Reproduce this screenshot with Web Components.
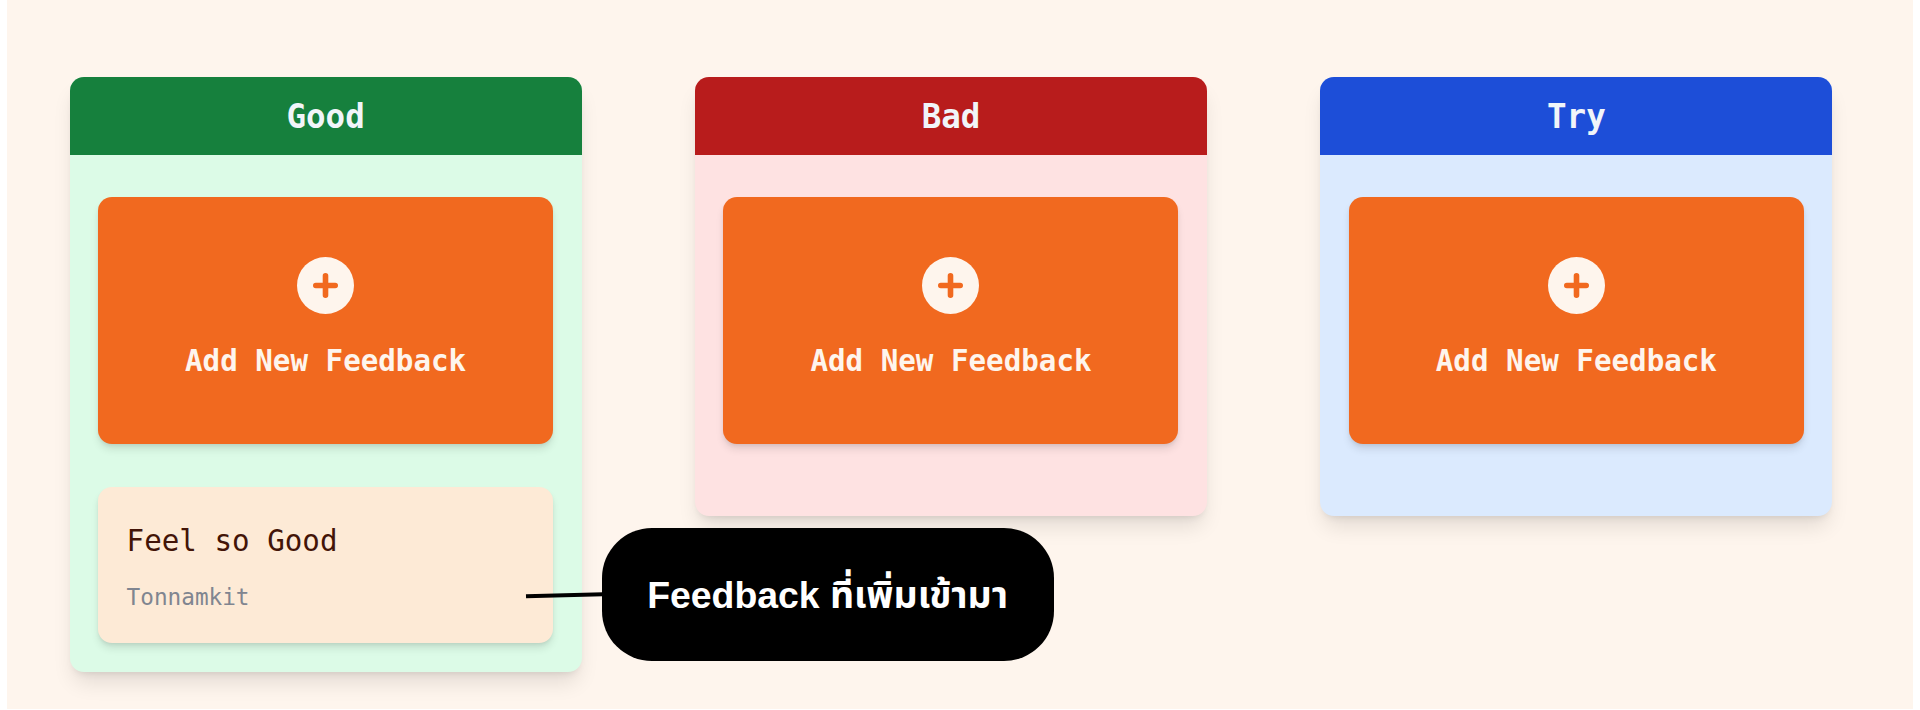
<!DOCTYPE html>
<html lang="th">
<head>
<meta charset="utf-8">
<title>Feedback board</title>
<style>
html,body{margin:0;height:100%;background:#fff;overflow:hidden}
</style>
</head>
<body>
<feedback-board>
  <feedback-column heading="Good" style="--head:#16803d;--body:#dcfbe7">
    <add-feedback></add-feedback>
    <feedback-card author="Tonnamkit">Feel so Good</feedback-card>
  </feedback-column>
  <feedback-column heading="Bad" style="--head:#b81c1c;--body:#fee2e2">
    <add-feedback></add-feedback>
  </feedback-column>
  <feedback-column heading="Try" style="--head:#1d4ed8;--body:#dbeafe">
    <add-feedback></add-feedback>
  </feedback-column>
  <callout-note slot="note">Feedback ที่เพิ่มเข้ามา</callout-note>
</feedback-board>
<script>
function define(name, html, setup) {
  customElements.define(name, class extends HTMLElement {
    constructor() {
      super();
      this.attachShadow({mode: 'open'}).innerHTML = html;
    }
    connectedCallback() { if (setup) setup(this, this.shadowRoot); }
  });
}

define('feedback-board', `
<style>
:host{display:block;position:relative;box-sizing:border-box;height:709px;margin:0 7px;padding:76.5px 62.6px 0;background:#fef5ed;font-family:"DejaVu Sans Mono",monospace}
.columns{display:flex;align-items:flex-start;gap:113.4px}
</style>
<div class="columns"><slot></slot></div><slot name="note"></slot>`);

define('feedback-column', `
<style>
:host{display:block;flex:none;width:512px;border-radius:14px;background:var(--body);box-shadow:0 14.3px 21.4px -4.3px rgba(0,0,0,.11),0 5.7px 8.6px -5.7px rgba(0,0,0,.13)}
header{height:78.2px;border-radius:14px 14px 0 0;background:var(--head);color:#f1f5f9;display:flex;align-items:center;justify-content:center}
h2{margin:3px 0 0;font-size:32.5px;line-height:40px;font-weight:700;transform:scaleY(1.04)}
.list{display:flex;flex-direction:column;gap:43px;padding:42.6px 28.5px 28.4px}
:host(:not([filled])) .list{padding-bottom:71.7px}
</style>
<header><h2></h2></header><div class="list"><slot></slot></div>`,
(el, root) => {
  root.querySelector('h2').textContent = el.getAttribute('heading');
  el.toggleAttribute('filled', !!el.querySelector('feedback-card'));
});

define('add-feedback', `
<style>
:host{display:flex;box-sizing:border-box;height:247px;padding-top:59.6px;flex-direction:column;align-items:center;border-radius:14px;background:#f1691f;color:#fef5ed;box-shadow:0 5.7px 8.6px -1.4px rgba(0,0,0,.11),0 2.9px 5.7px -2.9px rgba(0,0,0,.12)}
svg{display:block;width:57px;height:57px}
span{margin-top:27.2px;font-size:29.2px;line-height:40px;font-weight:700;white-space:pre;transform:scaleY(1.04)}
</style>
<svg viewBox="0 0 57 57"><circle cx="28.5" cy="28.5" r="28.5" fill="#fef5ed"/><path d="M28.5 18.8v19.4M18.8 28.5h19.4" stroke="#f1691f" stroke-width="5.6" stroke-linecap="round"/></svg>
<span>Add New Feedback</span>`);

define('feedback-card', `
<style>
:host{display:block;box-sizing:border-box;height:156.2px;padding:34px 28.5px 0;border-radius:14px;background:#fdead6;box-shadow:0 5.7px 8.6px -1.4px rgba(0,0,0,.11),0 2.9px 5.7px -2.9px rgba(0,0,0,.12)}
.title{font-size:29.2px;line-height:40px;color:#431407;transform:scaleY(1.05)}
.author{margin-top:19.8px;font-size:22.7px;line-height:32px;color:#808590;transform:scaleY(1.05)}
</style>
<div class="title"><slot></slot></div><div class="author"></div>`,
(el, root) => { root.querySelector('.author').textContent = el.getAttribute('author'); });

define('callout-note', `
<style>
:host{position:absolute;left:595.4px;top:527.8px;width:451.4px;height:133.2px;border-radius:50px;background:#000;color:#fff;display:flex;align-items:center;justify-content:center;font:700 37.4px/44px "Liberation Sans","Noto Sans Thai","Noto Sans",sans-serif}
svg{position:absolute;right:100%;top:63px;width:76px;height:12px;overflow:visible}
span{white-space:nowrap;padding-top:1px;margin-left:-1px}
</style>
<svg viewBox="0 0 76 12"><path d="M0 5.3L77 3.2" stroke="#000" stroke-width="4"/></svg>
<span><slot></slot></span>`);
</script>
</body>
</html>
